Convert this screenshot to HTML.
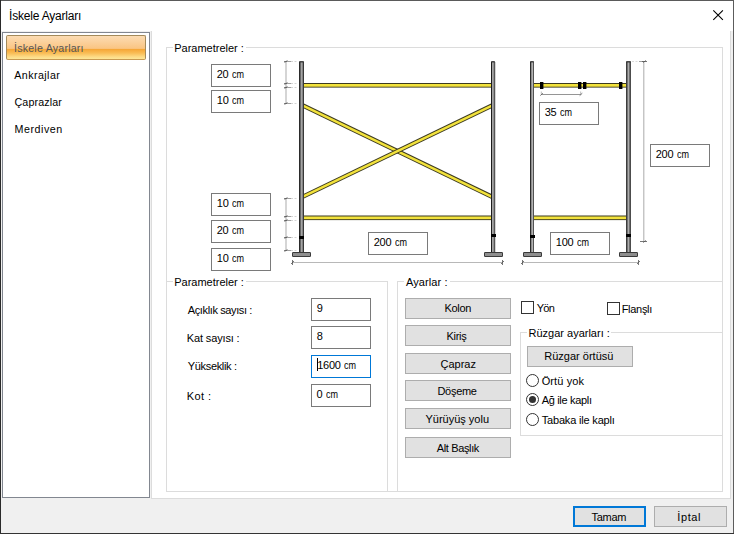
<!DOCTYPE html>
<html lang="tr">
<head>
<meta charset="utf-8">
<title>İskele Ayarları</title>
<style>
html,body{margin:0;padding:0;}
body{width:734px;height:534px;overflow:hidden;background:#3c3c3c;font-family:"Liberation Sans",sans-serif;}
#win{position:absolute;left:0;top:0;width:734px;height:534px;overflow:hidden;background:#f0f0f0;}
.a{position:absolute;box-sizing:border-box;}
.t{position:absolute;white-space:nowrap;line-height:16px;height:16px;font-family:"Liberation Sans",sans-serif;}
.edge{position:absolute;background:#4a4a4a;}
.inp{position:absolute;box-sizing:border-box;border:1px solid #7a7a7a;background:#fff;width:60px;height:23px;}
.btn{position:absolute;box-sizing:border-box;border:1px solid #adadad;background:#e1e1e1;width:106px;height:21px;}
.grp{position:absolute;box-sizing:border-box;border:1px solid #dcdcdc;}
.lblbg{position:absolute;background:#fff;height:12px;}
.chk{position:absolute;box-sizing:border-box;border:1px solid #333;background:#fff;width:13px;height:13px;}
.rad{position:absolute;box-sizing:border-box;border:1px solid #333;background:#fff;width:13px;height:13px;border-radius:50%;}
.cm{display:inline-block;transform:scaleX(.82);transform-origin:0 50%;letter-spacing:0;}

</style>
</head>
<body>
<div id="win">
<!-- title bar -->
<div class="a" style="left:1px;top:1px;width:732px;height:30px;background:#fff;"></div>
<svg class="a" style="left:708px;top:5px;" width="20" height="20" viewBox="0 0 20 20"><path d="M5.3 5.3 L14.9 14.9 M14.9 5.3 L5.3 14.9" stroke="#000" stroke-width="1.1" fill="none"/></svg>
<!-- white panel -->
<div class="a" style="left:151px;top:31px;width:580px;height:468px;background:#fff;border:1px solid #dcdcdc;border-top:none;"></div>
<!-- list box -->
<div class="a" style="left:2px;top:32px;width:148px;height:466px;background:#fff;border:1px solid #828790;"></div>
<div class="a" id="sel" style="left:6px;top:35px;width:140px;height:25px;border:1px solid #a48a5a;border-bottom-color:#c89a52;border-radius:2px;background:linear-gradient(to bottom,#fcdcb3 0px,#fbd19c 6px,#fac583 12.4px,#f6a737 13.4px,#f9bc55 17px,#fddc88 21px,#fee696 23px);"></div>

<!-- group boxes -->
<div class="grp" style="left:166px;top:47px;width:557px;height:445px;"></div>
<div class="lblbg" style="left:173px;top:41px;width:73px;"></div>
<div class="grp" style="left:166px;top:281px;width:222px;height:211px;"></div>
<div class="lblbg" style="left:173px;top:275px;width:73px;"></div>
<div class="a" style="left:388px;top:281px;width:9px;height:210px;background:#fff;"></div>
<div class="grp" style="left:397px;top:281px;width:326px;height:211px;"></div>
<div class="lblbg" style="left:404px;top:275px;width:46px;"></div>
<div class="grp" style="left:520px;top:332px;width:203px;height:104px;border-right:none;"></div>
<div class="lblbg" style="left:527px;top:326px;width:84px;"></div>

<!-- DIAGRAM -->
<svg class="a" style="left:0;top:0;" width="734" height="534" viewBox="0 0 734 534"><defs><clipPath id="cf"><rect x="303.5" y="90" width="188" height="125"/></clipPath></defs><rect x="303.6" y="83" width="187.39999999999998" height="4.6" fill="#3c3a20"/><rect x="303.6" y="84" width="187.39999999999998" height="2.7" fill="#f2e23c"/>
<rect x="303.6" y="215.5" width="187.39999999999998" height="4.6" fill="#3c3a20"/><rect x="303.6" y="216.5" width="187.39999999999998" height="2.7" fill="#f2e23c"/>
<g clip-path="url(#cf)"><line x1="303" y1="105.6" x2="492" y2="196.8" stroke="#3c3a20" stroke-width="4.4"/><line x1="303" y1="105.6" x2="492" y2="196.8" stroke="#f2e23c" stroke-width="2.5"/><line x1="303" y1="196.6" x2="492" y2="105.6" stroke="#3c3a20" stroke-width="4.4"/><line x1="303" y1="196.6" x2="492" y2="105.6" stroke="#f2e23c" stroke-width="2.5"/></g>
<rect x="299" y="62" width="1" height="191" fill="#2a2a2a"/><rect x="300" y="62" width="1" height="191" fill="#666666"/><rect x="301" y="62" width="1" height="191" fill="#a4a4a4"/><rect x="302" y="62" width="1" height="191" fill="#848484"/><rect x="303" y="62" width="1" height="191" fill="#383838"/><rect x="299" y="61" width="5" height="1.6" rx="0.8" fill="#333" opacity=".9"/>
<rect x="491" y="62" width="1" height="191" fill="#1c1c1c"/><rect x="492" y="62" width="1" height="191" fill="#a4a4a4"/><rect x="493" y="62" width="1" height="191" fill="#929292"/><rect x="494" y="62" width="1" height="191" fill="#555555"/><rect x="495" y="62" width="1" height="191" fill="#d4d4d4"/><rect x="491" y="61" width="4" height="1.6" rx="0.8" fill="#333" opacity=".9"/>
<rect x="299" y="236" width="5" height="3" fill="#000"/>
<rect x="491" y="234" width="5" height="3" fill="#000"/>
<rect x="292" y="252" width="19" height="5" rx="1.2" fill="#3a3a3a"/><rect x="293" y="253" width="17" height="3" fill="#8e8e8e"/>
<rect x="484" y="252" width="19" height="5" rx="1.2" fill="#3a3a3a"/><rect x="485" y="253" width="17" height="3" fill="#8e8e8e"/>
<line x1="286" y1="61.5" x2="286" y2="103.5" stroke="#bcbcbc" stroke-width="1.25"/><path d="M284 61.5 H288.5 M284.5 62.5 L287.5 60.5" stroke="#555" stroke-width="1" fill="none" opacity=".75"/><line x1="287" y1="61.5" x2="291" y2="61.5" stroke="#a0a0a0" stroke-width="1"/><line x1="291" y1="61.5" x2="298" y2="61.5" stroke="#d4d4d4" stroke-width="1" stroke-dasharray="2 1.5"/><path d="M284 83.5 H288.5 M284.5 84.5 L287.5 82.5" stroke="#555" stroke-width="1" fill="none" opacity=".75"/><line x1="287" y1="83.5" x2="291" y2="83.5" stroke="#a0a0a0" stroke-width="1"/><line x1="291" y1="83.5" x2="298" y2="83.5" stroke="#d4d4d4" stroke-width="1" stroke-dasharray="2 1.5"/><path d="M284 87.5 H288.5 M284.5 88.5 L287.5 86.5" stroke="#555" stroke-width="1" fill="none" opacity=".75"/><line x1="287" y1="87.5" x2="291" y2="87.5" stroke="#a0a0a0" stroke-width="1"/><line x1="291" y1="87.5" x2="298" y2="87.5" stroke="#d4d4d4" stroke-width="1" stroke-dasharray="2 1.5"/><path d="M284 103.5 H288.5 M284.5 104.5 L287.5 102.5" stroke="#555" stroke-width="1" fill="none" opacity=".75"/><line x1="287" y1="103.5" x2="291" y2="103.5" stroke="#a0a0a0" stroke-width="1"/><line x1="291" y1="103.5" x2="298" y2="103.5" stroke="#d4d4d4" stroke-width="1" stroke-dasharray="2 1.5"/>
<line x1="286" y1="198.5" x2="286" y2="250.5" stroke="#bcbcbc" stroke-width="1.25"/><path d="M284 198.5 H288.5 M284.5 199.5 L287.5 197.5" stroke="#555" stroke-width="1" fill="none" opacity=".75"/><line x1="287" y1="198.5" x2="291" y2="198.5" stroke="#a0a0a0" stroke-width="1"/><line x1="291" y1="198.5" x2="298" y2="198.5" stroke="#d4d4d4" stroke-width="1" stroke-dasharray="2 1.5"/><path d="M284 216.5 H288.5 M284.5 217.5 L287.5 215.5" stroke="#555" stroke-width="1" fill="none" opacity=".75"/><line x1="287" y1="216.5" x2="291" y2="216.5" stroke="#a0a0a0" stroke-width="1"/><line x1="291" y1="216.5" x2="298" y2="216.5" stroke="#d4d4d4" stroke-width="1" stroke-dasharray="2 1.5"/><path d="M284 220.5 H288.5 M284.5 221.5 L287.5 219.5" stroke="#555" stroke-width="1" fill="none" opacity=".75"/><line x1="287" y1="220.5" x2="291" y2="220.5" stroke="#a0a0a0" stroke-width="1"/><line x1="291" y1="220.5" x2="298" y2="220.5" stroke="#d4d4d4" stroke-width="1" stroke-dasharray="2 1.5"/><path d="M284 237.5 H288.5 M284.5 238.5 L287.5 236.5" stroke="#555" stroke-width="1" fill="none" opacity=".75"/><line x1="287" y1="237.5" x2="291" y2="237.5" stroke="#a0a0a0" stroke-width="1"/><line x1="291" y1="237.5" x2="298" y2="237.5" stroke="#d4d4d4" stroke-width="1" stroke-dasharray="2 1.5"/><path d="M284 250.5 H288.5 M284.5 251.5 L287.5 249.5" stroke="#555" stroke-width="1" fill="none" opacity=".75"/><line x1="287" y1="250.5" x2="291" y2="250.5" stroke="#a0a0a0" stroke-width="1"/><line x1="291" y1="250.5" x2="298" y2="250.5" stroke="#d4d4d4" stroke-width="1" stroke-dasharray="2 1.5"/>
<line x1="292" y1="262.5" x2="502" y2="262.5" stroke="#b8b8b8" stroke-width="1"/><path d="M292.5 260 V265 M291 264 L294 261" stroke="#555" stroke-width="1" fill="none" opacity=".8"/><path d="M502.5 260 V265 M501 264 L504 261" stroke="#555" stroke-width="1" fill="none" opacity=".8"/>
<rect x="533.7" y="83" width="92.29999999999995" height="4.6" fill="#3c3a20"/><rect x="533.7" y="84" width="92.29999999999995" height="2.7" fill="#f2e23c"/>
<rect x="533.7" y="215.5" width="92.29999999999995" height="4.6" fill="#3c3a20"/><rect x="533.7" y="216.5" width="92.29999999999995" height="2.7" fill="#f2e23c"/>
<rect x="540" y="82" width="3.4" height="7" fill="#000"/>
<rect x="578" y="82" width="3.4" height="7" fill="#000"/>
<rect x="583" y="82" width="3.4" height="7" fill="#000"/>
<rect x="619" y="82" width="3.4" height="7" fill="#000"/>
<rect x="530" y="62" width="1" height="191" fill="#2c2c2c"/><rect x="531" y="62" width="1" height="191" fill="#8e8e8e"/><rect x="532" y="62" width="1" height="191" fill="#b2b2b2"/><rect x="533" y="62" width="1" height="191" fill="#525252"/><rect x="530" y="61" width="4" height="1.6" rx="0.8" fill="#333" opacity=".9"/>
<rect x="626" y="62" width="1" height="191" fill="#3c3c3c"/><rect x="627" y="62" width="1" height="191" fill="#727272"/><rect x="628" y="62" width="1" height="191" fill="#acacac"/><rect x="629" y="62" width="1" height="191" fill="#707070"/><rect x="630" y="62" width="1" height="191" fill="#4c4c4c"/><rect x="626" y="61" width="5" height="1.6" rx="0.8" fill="#333" opacity=".9"/>
<rect x="530" y="235" width="5" height="3" fill="#000"/>
<rect x="626" y="234" width="5" height="3" fill="#000"/>
<rect x="523" y="252" width="19" height="5" rx="1.2" fill="#3a3a3a"/><rect x="524" y="253" width="17" height="3" fill="#8e8e8e"/>
<rect x="619" y="252" width="19" height="5" rx="1.2" fill="#3a3a3a"/><rect x="620" y="253" width="17" height="3" fill="#8e8e8e"/>
<line x1="541.3" y1="94.5" x2="580.7" y2="94.5" stroke="#959595" stroke-width="1"/><path d="M541.3 91.5 V94.5" stroke="#bbb" stroke-width="1" fill="none"/><path d="M540.3 95.6 L542.9 93.2" stroke="#555" stroke-width="1" fill="none" opacity=".8"/><path d="M580.7 91.5 V94.5" stroke="#bbb" stroke-width="1" fill="none"/><path d="M579.7 95.6 L582.3000000000001 93.2" stroke="#555" stroke-width="1" fill="none" opacity=".8"/>
<line x1="522" y1="262.5" x2="638" y2="262.5" stroke="#b8b8b8" stroke-width="1"/><path d="M522.5 260 V265 M521 264 L524 261" stroke="#555" stroke-width="1" fill="none" opacity=".8"/><path d="M638.5 260 V265 M637 264 L640 261" stroke="#555" stroke-width="1" fill="none" opacity=".8"/>
<line x1="643.8" y1="61" x2="643.8" y2="241" stroke="#b2b2b2" stroke-width="1.1"/>
<line x1="632" y1="61.5" x2="640" y2="61.5" stroke="#dcdcdc" stroke-width="1" stroke-dasharray="2 1.5"/><line x1="639" y1="61.5" x2="643" y2="61.5" stroke="#a0a0a0" stroke-width="1"/>
<path d="M642 61.5 H647 M643 62.5 L646 60.5" stroke="#555" stroke-width="1" fill="none" opacity=".8"/>
<path d="M640 241.5 H647 M643 242.5 L646 240.5" stroke="#555" stroke-width="1" fill="none" opacity=".8"/></svg>
<!-- diagram inputs -->
<div class="inp" style="left:211px;top:64px;"></div>
<div class="inp" style="left:211px;top:90px;"></div>
<div class="inp" style="left:211px;top:193px;"></div>
<div class="inp" style="left:211px;top:220px;"></div>
<div class="inp" style="left:211px;top:248px;"></div>
<div class="inp" style="left:368px;top:232px;"></div>
<div class="inp" style="left:539px;top:102px;"></div>
<div class="inp" style="left:650px;top:144px;"></div>
<div class="inp" style="left:550px;top:232px;"></div>

<!-- parameter inputs -->
<div class="inp" style="left:311px;top:298px;"></div>
<div class="inp" style="left:311px;top:326px;"></div>
<div class="inp" style="left:311px;top:355px;border-color:#0078d7;"></div>
<div class="a" style="left:317px;top:358px;width:1px;height:13px;background:#000;"></div>
<div class="inp" style="left:311px;top:384px;"></div>

<!-- buttons -->
<div class="btn" style="left:405px;top:298px;"></div>
<div class="btn" style="left:405px;top:325px;"></div>
<div class="btn" style="left:405px;top:353px;"></div>
<div class="btn" style="left:405px;top:380px;"></div>
<div class="btn" style="left:405px;top:408px;"></div>
<div class="btn" style="left:405px;top:437px;"></div>
<div class="btn" style="left:527px;top:346px;width:106px;"></div>

<div class="chk" style="left:521px;top:301px;"></div>
<div class="chk" style="left:607px;top:302px;"></div>
<div class="rad" style="left:526px;top:374px;"></div>
<div class="rad" style="left:526px;top:393px;"></div>
<div class="a" style="left:529px;top:396px;width:7px;height:7px;border-radius:50%;background:#333;"></div>
<div class="rad" style="left:526px;top:413px;"></div>

<!-- bottom buttons -->
<div class="btn" style="left:573px;top:506px;width:73px;border:2px solid #0078d7;"></div>
<div class="btn" style="left:654px;top:506px;width:73px;"></div>

<!-- window edges -->
<div class="edge" style="left:0;top:0;width:734px;height:1px;background:#5a5a5a;"></div>
<div class="edge" style="left:0;top:0;width:1px;height:534px;background:#2a2a2a;"></div>
<div class="edge" style="left:733px;top:0;width:1px;height:534px;background:#5c5c5c;"></div>
<div class="edge" style="left:0;top:533px;width:734px;height:1px;background:#333;"></div>

<span class="t" id="t0" style="left:9.02px;top:7.54px;font-size:12px;color:#000;letter-spacing:-0.194px;">İskele Ayarları</span>
<span class="t" id="t1" style="left:14.02px;top:39.89px;font-size:10.7px;color:#555;letter-spacing:0.189px;">İskele Ayarları</span>
<span class="t" id="t2" style="left:14.20px;top:67.09px;font-size:10.7px;color:#000;letter-spacing:0.440px;">Ankrajlar</span>
<span class="t" id="t3" style="left:14.50px;top:94.09px;font-size:10.7px;color:#000;letter-spacing:0.120px;">Çaprazlar</span>
<span class="t" id="t4" style="left:14.50px;top:120.99px;font-size:10.7px;color:#000;letter-spacing:0.549px;">Merdiven</span>
<span class="t" id="t5" style="left:174.20px;top:40.19px;font-size:11px;color:#000;">Parametreler :</span>
<span class="t" id="t6" style="left:174.20px;top:274.19px;font-size:11px;color:#000;">Parametreler :</span>
<span class="t" id="t7" style="left:406.00px;top:274.19px;font-size:11px;color:#000;letter-spacing:0.100px;">Ayarlar :</span>
<span class="t" id="t8" style="left:528.50px;top:324.69px;font-size:11px;color:#000;">Rüzgar ayarları :</span>
<span class="t" id="t9" style="left:216.74px;top:66.19px;font-size:11px;color:#000;letter-spacing:-0.26px;word-spacing:0.45px;">20 <span class="cm">cm</span></span>
<span class="t" id="t10" style="left:216.84px;top:92.19px;font-size:11px;color:#000;letter-spacing:-0.26px;word-spacing:0.45px;">10 <span class="cm">cm</span></span>
<span class="t" id="t11" style="left:216.84px;top:195.19px;font-size:11px;color:#000;letter-spacing:-0.26px;word-spacing:0.45px;">10 <span class="cm">cm</span></span>
<span class="t" id="t12" style="left:216.74px;top:222.19px;font-size:11px;color:#000;letter-spacing:-0.26px;word-spacing:0.45px;">20 <span class="cm">cm</span></span>
<span class="t" id="t13" style="left:216.84px;top:250.19px;font-size:11px;color:#000;letter-spacing:-0.26px;word-spacing:0.45px;">10 <span class="cm">cm</span></span>
<span class="t" id="t14" style="left:373.74px;top:234.19px;font-size:11px;color:#000;letter-spacing:-0.26px;word-spacing:0.45px;">200 <span class="cm">cm</span></span>
<span class="t" id="t15" style="left:544.74px;top:104.19px;font-size:11px;color:#000;letter-spacing:-0.26px;word-spacing:0.45px;">35 <span class="cm">cm</span></span>
<span class="t" id="t16" style="left:655.74px;top:146.19px;font-size:11px;color:#000;letter-spacing:-0.26px;word-spacing:0.45px;">200 <span class="cm">cm</span></span>
<span class="t" id="t17" style="left:555.84px;top:234.19px;font-size:11px;color:#000;letter-spacing:-0.26px;word-spacing:0.45px;">100 <span class="cm">cm</span></span>
<span class="t" id="t18" style="left:187.80px;top:301.79px;font-size:11px;color:#000;letter-spacing:-0.384px;">Açıklık sayısı :</span>
<span class="t" id="t19" style="left:186.84px;top:330.49px;font-size:11px;color:#000;letter-spacing:-0.145px;">Kat sayısı :</span>
<span class="t" id="t20" style="left:187.80px;top:358.49px;font-size:11px;color:#000;letter-spacing:-0.336px;">Yükseklik :</span>
<span class="t" id="t21" style="left:186.84px;top:387.59px;font-size:11px;color:#000;letter-spacing:0.400px;">Kot :</span>
<span class="t" id="t22" style="left:316.80px;top:300.19px;font-size:11px;color:#000;">9</span>
<span class="t" id="t23" style="left:316.80px;top:328.19px;font-size:11px;color:#000;">8</span>
<span class="t" id="t24" style="left:317.20px;top:356.79px;font-size:11px;color:#000;letter-spacing:-0.26px;word-spacing:0.45px;">1600 <span class="cm">cm</span></span>
<span class="t" id="t25" style="left:316.60px;top:385.99px;font-size:11px;color:#000;letter-spacing:-0.26px;word-spacing:0.45px;">0 <span class="cm">cm</span></span>
<span class="t" id="t26" style="left:444.50px;top:300.49px;font-size:11px;color:#000;letter-spacing:-0.300px;">Kolon</span>
<span class="t" id="t27" style="left:446.44px;top:327.59px;font-size:11px;color:#000;letter-spacing:-0.260px;">Kiriş</span>
<span class="t" id="t28" style="left:440.50px;top:355.69px;font-size:11px;color:#000;">Çapraz</span>
<span class="t" id="t29" style="left:437.44px;top:382.79px;font-size:11px;color:#000;letter-spacing:-0.288px;">Döşeme</span>
<span class="t" id="t30" style="left:425.44px;top:410.79px;font-size:11px;color:#000;">Yürüyüş yolu</span>
<span class="t" id="t31" style="left:436.70px;top:439.69px;font-size:11px;color:#000;letter-spacing:-0.356px;">Alt Başlık</span>
<span class="t" id="t32" style="left:536.70px;top:299.59px;font-size:11px;color:#000;letter-spacing:-0.680px;">Yön</span>
<span class="t" id="t33" style="left:621.66px;top:300.79px;font-size:11px;color:#000;letter-spacing:-0.293px;">Flanşlı</span>
<span class="t" id="t34" style="left:544.18px;top:348.19px;font-size:11px;color:#000;letter-spacing:0.013px;">Rüzgar örtüsü</span>
<span class="t" id="t35" style="left:541.70px;top:372.69px;font-size:11px;color:#000;letter-spacing:0.103px;">Örtü yok</span>
<span class="t" id="t36" style="left:541.70px;top:391.79px;font-size:11px;color:#000;letter-spacing:-0.320px;">Ağ ile kaplı</span>
<span class="t" id="t37" style="left:541.70px;top:411.89px;font-size:11px;color:#000;letter-spacing:-0.176px;">Tabaka ile kaplı</span>
<span class="t" id="t38" style="left:591.50px;top:508.89px;font-size:11px;color:#000;letter-spacing:-0.260px;">Tamam</span>
<span class="t" id="t39" style="left:677.30px;top:508.89px;font-size:11px;color:#000;letter-spacing:0.600px;">İptal</span>
</div>
</body>
</html>
